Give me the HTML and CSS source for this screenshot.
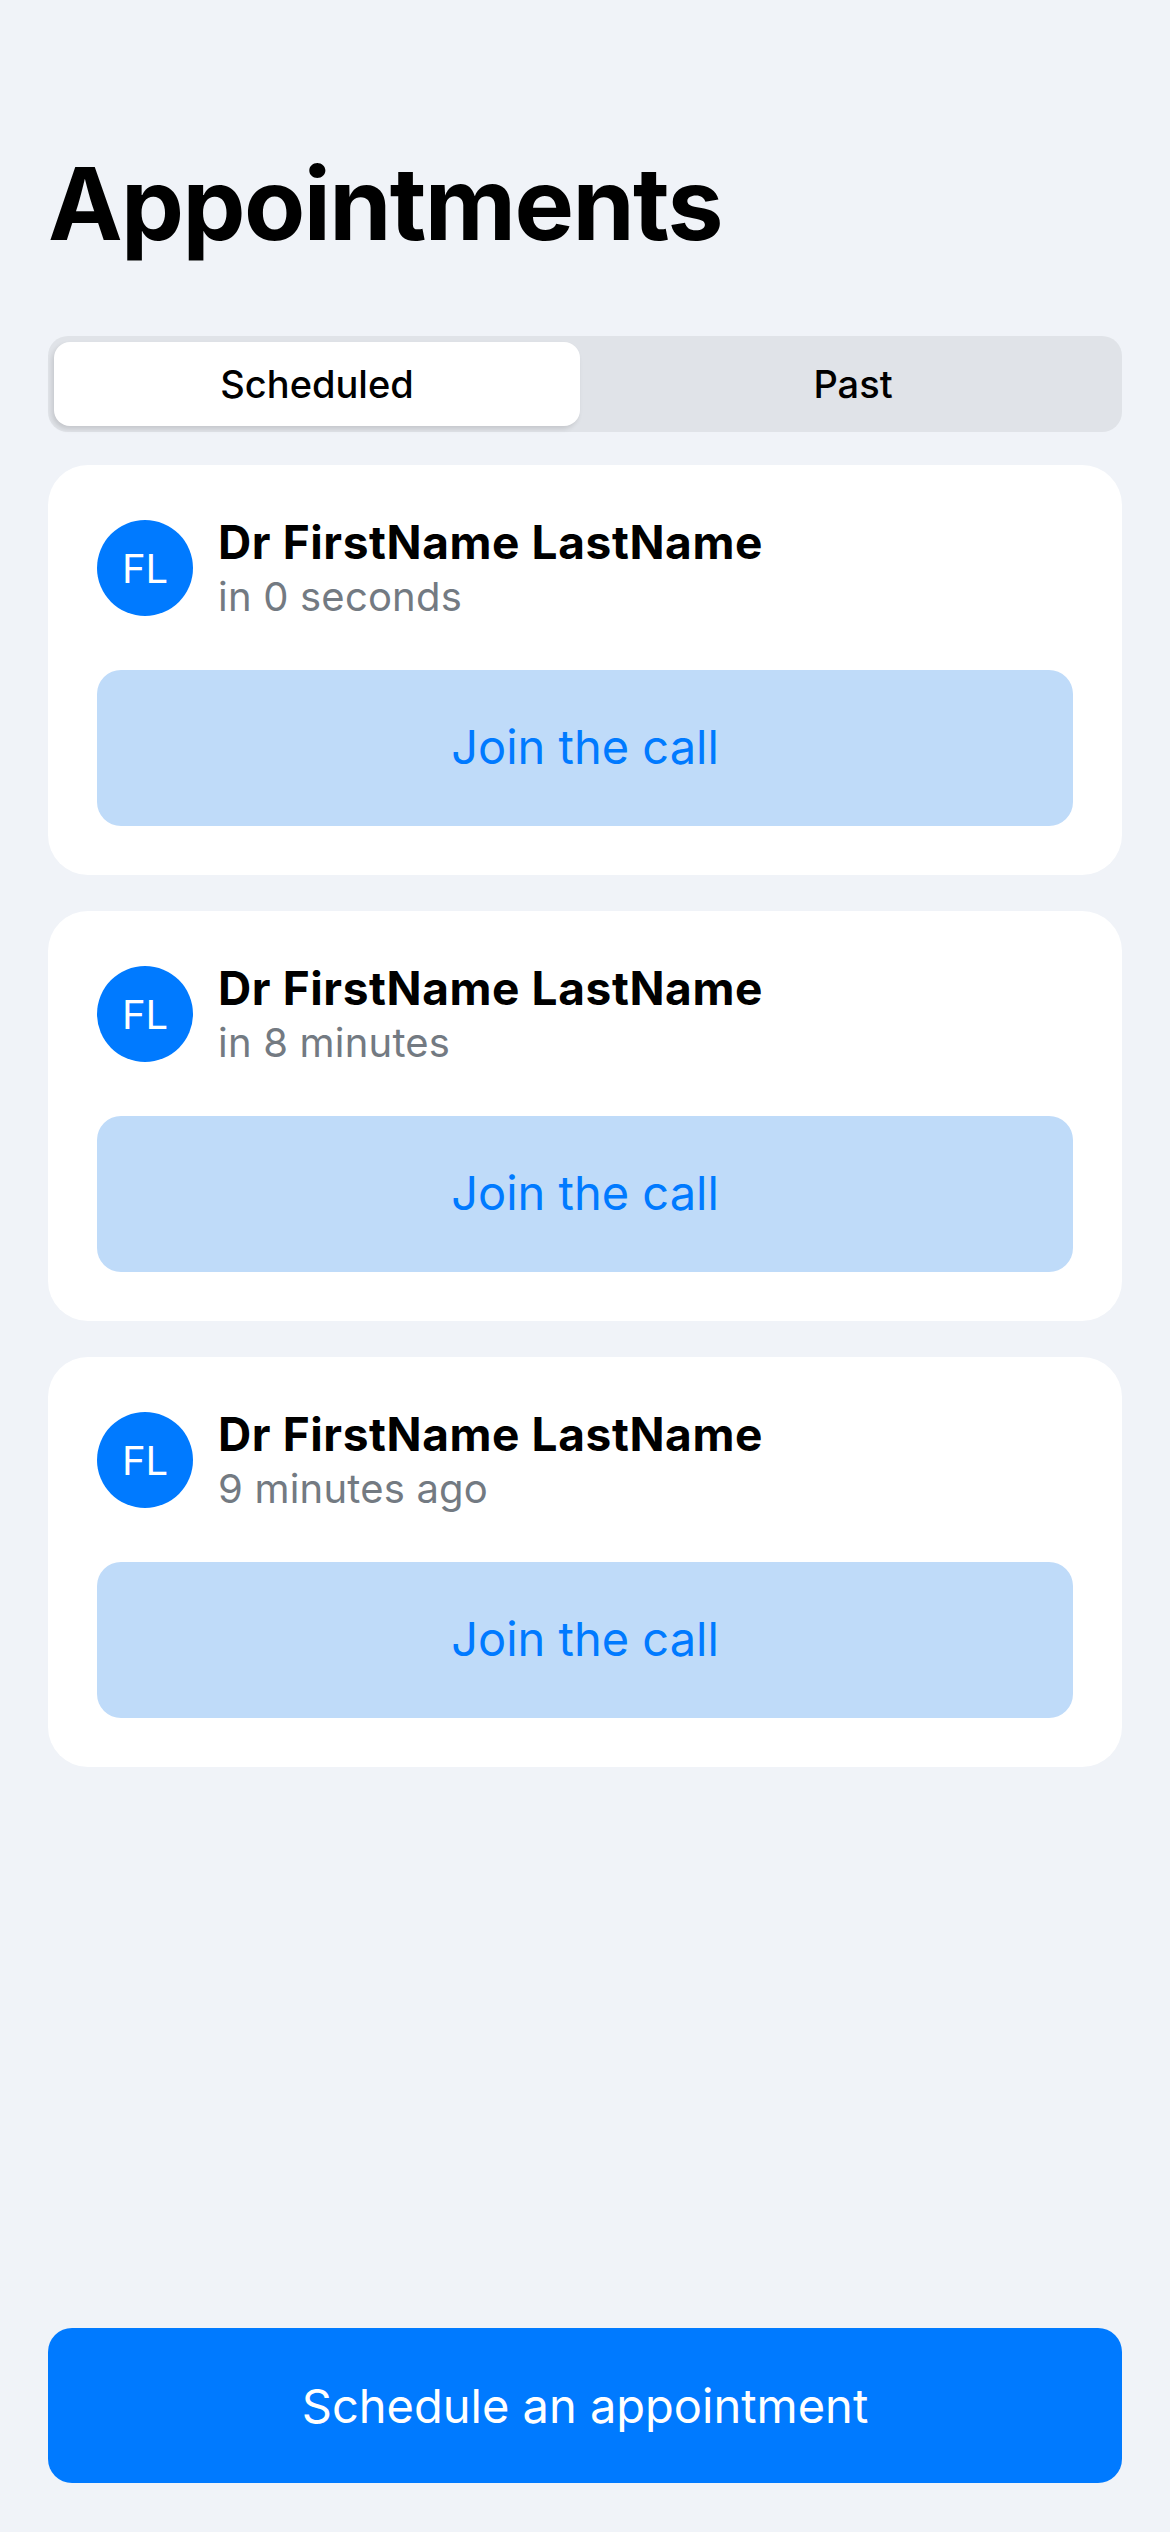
FILE: index.html
```html
<!DOCTYPE html>
<html lang="en">
<head>
<meta charset="utf-8">
<title>Appointments</title>
<link rel="stylesheet" href="styles.css">
</head>
<body>
<div class="page">
  <h1 class="title">Appointments</h1>
  <div class="segmented">
    <div class="segment active">Scheduled</div>
    <div class="segment">Past</div>
  </div>
  <div class="list">
    <div class="card">
      <div class="card-head">
        <div class="avatar">FL</div>
        <div class="info">
          <div class="name">Dr FirstName LastName</div>
          <div class="when">in 0 seconds</div>
        </div>
      </div>
      <button class="join">Join the call</button>
    </div>
    <div class="card">
      <div class="card-head">
        <div class="avatar">FL</div>
        <div class="info">
          <div class="name">Dr FirstName LastName</div>
          <div class="when">in 8 minutes</div>
        </div>
      </div>
      <button class="join">Join the call</button>
    </div>
    <div class="card">
      <div class="card-head">
        <div class="avatar">FL</div>
        <div class="info">
          <div class="name">Dr FirstName LastName</div>
          <div class="when">9 minutes ago</div>
        </div>
      </div>
      <button class="join">Join the call</button>
    </div>
  </div>
  <button class="schedule">Schedule an appointment</button>
</div>
</body>
</html>
```
FILE: styles.css
```css
* { box-sizing: border-box; }
html, body { margin: 0; padding: 0; }
body {
  background: #f0f3f8;
  font-family: Inter, "Noto Sans", "Liberation Sans", sans-serif;
  color: #000;
}
.page {
  height: 2532px;
  display: flex;
  flex-direction: column;
  padding: 144px 48px 49px;
}
.title {
  margin: 0;
  font-size: 100px;
  line-height: 120px;
  font-weight: 700;
  letter-spacing: -1.6px;
}
.segmented {
  margin-top: 72px;
  height: 96px;
  background: #e0e3e8;
  border-radius: 20px;
  padding: 6px;
  display: flex;
}
.segment {
  flex: 1;
  display: flex;
  align-items: center;
  justify-content: center;
  font-size: 38px;
  font-weight: 500;
  border-radius: 16px;
}
.segment.active {
  background: #fff;
  box-shadow: -2px 3px 5px rgba(0, 0, 0, 0.12);
  margin-right: 10px;
}
.list {
  margin-top: 33px;
  display: flex;
  flex-direction: column;
  gap: 36px;
}
.card {
  background: #fff;
  border-radius: 40px;
  padding: 48px 49px 49px;
  display: flex;
  flex-direction: column;
  gap: 47px;
}
.card-head {
  display: flex;
  align-items: center;
  gap: 25px;
  height: 110px;
}
.avatar {
  width: 96px;
  height: 96px;
  border-radius: 50%;
  background: #007aff;
  color: #fff;
  font-size: 40px;
  display: flex;
  align-items: center;
  justify-content: center;
  flex-shrink: 0;
}
.info {
  display: flex;
  flex-direction: column;
}
.name {
  font-size: 46px;
  font-weight: 700;
  line-height: 54px;
  letter-spacing: 0.6px;
}
.when {
  margin-top: 3px;
  font-size: 40px;
  line-height: 50px;
  color: #737a82;
  letter-spacing: 0.2px;
}
button {
  font-family: inherit;
  border: none;
  cursor: pointer;
}
.join {
  height: 156px;
  padding: 0 0 4px;
  border-radius: 24px;
  background: #bfdbf9;
  color: #007aff;
  font-size: 47px;
}
.schedule {
  margin-top: auto;
  height: 155px;
  border-radius: 24px;
  background: #007aff;
  color: #fff;
  font-size: 47px;
}
```
